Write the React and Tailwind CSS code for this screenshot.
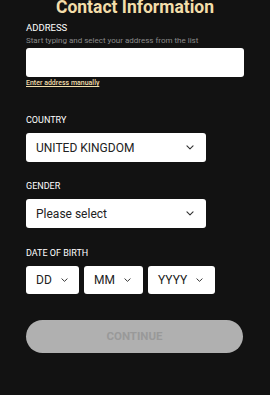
function Chevron({ size = 8 }) {
  return (
    <svg width={size} height={size * 0.6} viewBox="0 0 10 6" fill="none" className="shrink-0">
      <path d="M1.2 1.2 L5 4.8 L8.8 1.2" stroke="#333" strokeWidth="1.4" strokeLinecap="round" strokeLinejoin="round" />
    </svg>
  );
}

function Label({ children, className = '' }) {
  return (
    <p className={`text-[9px] leading-[11px] uppercase text-white ${className}`}>{children}</p>
  );
}

function Select({ value, width, className = '' }) {
  return (
    <div
      className={`flex h-[29px] items-center justify-between rounded-[3px] bg-white pl-[10px] pr-[12px] text-[12px] text-[#222] ${width} ${className}`}
    >
      <span>{value}</span>
      <Chevron />
    </div>
  );
}

function DateBox({ value, width }) {
  return (
    <div className={`flex h-[28px] items-center gap-[9px] rounded-[3px] bg-white pl-[10px] text-[12px] text-[#222] ${width}`}>
      <span>{value}</span>
      <Chevron size={7} />
    </div>
  );
}

export default function App() {
  return (
    <div className="h-[395px] w-full overflow-hidden bg-[#121212] px-[26px] font-['Roboto',sans-serif]">
      <h1 className="-mt-[2px] text-center text-[17.5px] font-bold leading-[19px] text-[#f3deaa]">
        Contact Information
      </h1>

      <p className="mt-[5px] text-[9.5px] leading-[12px] uppercase text-white">Address</p>
      <p className="mt-[2px] text-[8px] leading-[10px] text-[#8a8a8a]">
        Start typing and select your address from the list
      </p>
      <div className="mt-[2px] h-[29px] w-[218px] rounded-[3px] bg-white" />
      <p className="mt-[2px] text-[7px] font-medium leading-[9px] text-[#f3deaa] underline">
        Enter address manually
      </p>

      <Label className="mt-[27px]">Country</Label>
      <Select value="UNITED KINGDOM" width="w-[180px]" className="mt-[7px]" />

      <Label className="mt-[19px]">Gender</Label>
      <Select value="Please select" width="w-[180px]" className="mt-[7px]" />

      <Label className="mt-[20px]">Date of birth</Label>
      <div className="mt-[7px] flex gap-[5px]">
        <DateBox value="DD" width="w-[53px]" />
        <DateBox value="MM" width="w-[59px]" />
        <DateBox value="YYYY" width="w-[67px]" />
      </div>

      <button
        type="button"
        disabled
        className="mt-[26px] flex h-[33px] w-[217px] items-center justify-center rounded-full bg-[#b0b0b0] text-[11.5px] font-bold text-[#999]"
      >
        CONTINUE
      </button>
    </div>
  );
}
